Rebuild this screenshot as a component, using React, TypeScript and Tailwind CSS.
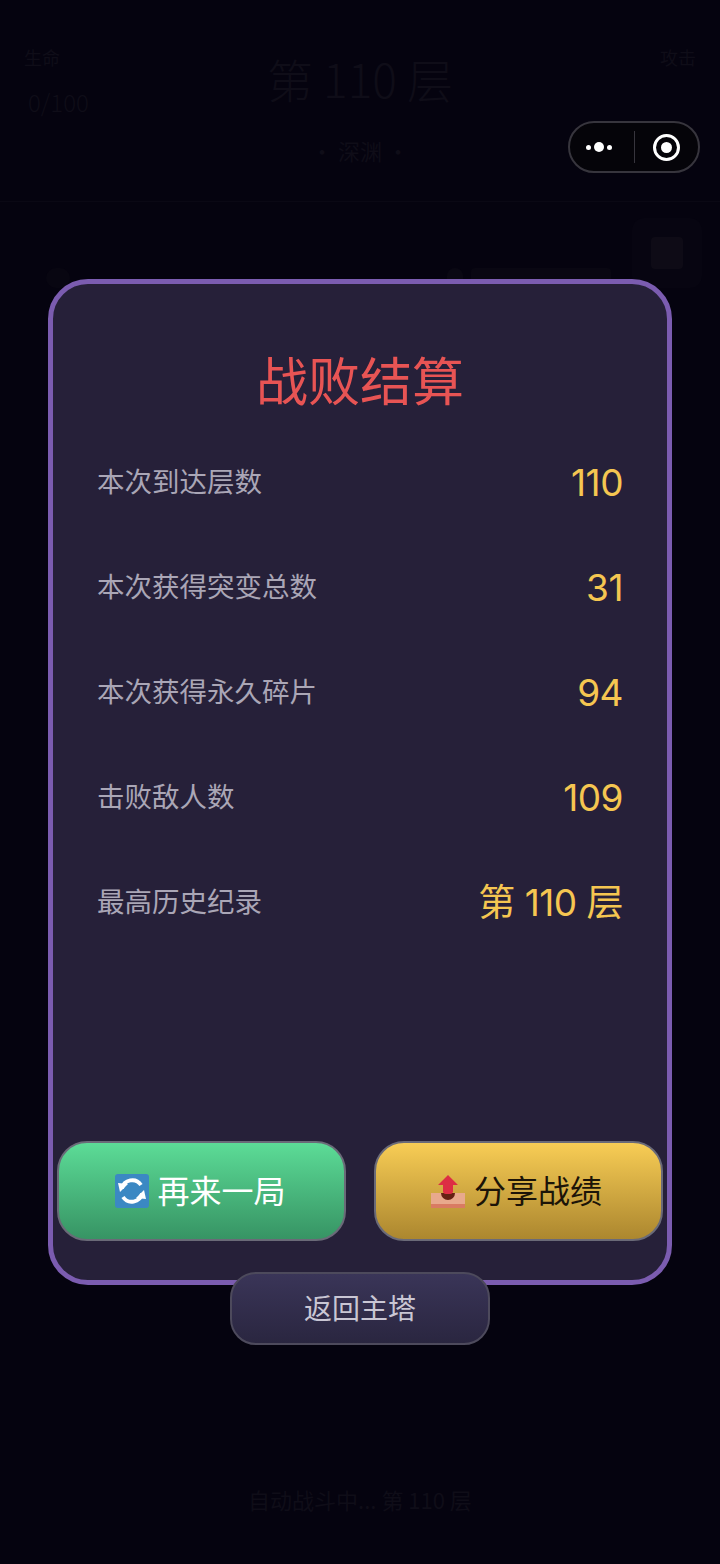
const stats = [
  { label: '本次到达层数', value: '110' },
  { label: '本次获得突变总数', value: '31' },
  { label: '本次获得永久碎片', value: '94' },
  { label: '击败敌人数', value: '109' },
  { label: '最高历史纪录', value: '第 110 层' },
];

function RefreshIcon() {
  return (
    <svg width="34" height="34" viewBox="0 0 34 34" className="shrink-0">
      <rect width="34" height="34" rx="3" fill="#3b88c3" />
      <path d="M7 14.5 A10.5 10.5 0 0 1 26 11" fill="none" stroke="#fff" strokeWidth="3.8" />
      <path d="M27 19.5 A10.5 10.5 0 0 1 8 23" fill="none" stroke="#fff" strokeWidth="3.8" />
      <path d="M3 9 L13 10 L5 18 Z" fill="#fff" />
      <path d="M21 24 L31 25 L29 16 Z" fill="#fff" />
    </svg>
  );
}

function ShareIcon() {
  return (
    <svg width="34" height="34" viewBox="0 0 34 34" className="shrink-0">
      <rect x="0" y="19" width="34" height="15" fill="#e8a98c" />
      <rect x="0" y="30" width="34" height="4" fill="#d97b62" />
      <path d="M10 19 H24 A7 7 0 0 1 10 19 Z" fill="#662113" />
      <path d="M17 1 L27 11 H22 V18 A3 3 0 0 1 19 20 H15 A3 3 0 0 1 12 18 V11 H7 Z" fill="#dd2e44" />
    </svg>
  );
}

export default function App() {
  return (
    <div className="relative h-[1564px] w-[720px] overflow-hidden bg-[#05030f] font-['Noto_Sans_CJK_SC',sans-serif]">
      {/* dim page behind the result dialog */}
      <div className="flex h-[202px] items-start justify-between border-b border-[#0a0814] px-6 pt-[42px] text-[#0f0d18]">
        <div className="flex w-[120px] flex-col text-lg">
          <span className="leading-[30px]">生命</span>
          <span className="mt-[15px] pl-1 text-2xl leading-[30px] font-light">0/100</span>
        </div>
        <div className="flex flex-col items-center">
          <span className="mt-[4px] text-[46px] leading-[64px] font-light">第 110 层</span>
          <span className="mt-[24px] text-[22px] leading-8">· 深渊 ·</span>
        </div>
        <span className="w-[120px] text-right text-lg leading-[30px]">攻击</span>
      </div>
      <div className="mt-4 flex h-[70px] items-end justify-between pr-[18px] pl-[46px]">
        <div className="h-[20px] w-6 rounded-full bg-[#080611]" />
        <div className="ml-[355px] flex items-end gap-2">
          <div className="h-[20px] w-4 rounded-full bg-[#0a0813]" />
          <div className="h-[20px] w-[140px] rounded-sm bg-[#090712]" />
        </div>
        <div className="flex h-[70px] w-[70px] items-center justify-center rounded-xl bg-[#070511]">
          <div className="h-8 w-8 rounded bg-[#0e0b16]" />
        </div>
      </div>
      <div className="mt-[1195px] text-center text-[22px] text-[#0f0d18]">自动战斗中... 第 110 层</div>

      {/* WeChat capsule */}
      <div className="absolute top-[121px] left-[568px] flex h-[52px] w-[132px] items-center rounded-full border-2 border-[#37353d] bg-[#050409]">
        <div className="flex w-[64px] items-center justify-center gap-[3px] pr-[6px]">
          <span className="h-[5px] w-[5px] rounded-full bg-white" />
          <span className="h-[10px] w-[10px] rounded-full bg-white" />
          <span className="h-[5px] w-[5px] rounded-full bg-white" />
        </div>
        <div className="h-8 w-px bg-[#37353d]" />
        <div className="flex flex-1 items-center justify-center">
          <div className="flex h-[27px] w-[27px] items-center justify-center rounded-full border-[3px] border-white">
            <span className="h-[11px] w-[11px] rounded-full bg-white" />
          </div>
        </div>
      </div>

      {/* result dialog */}
      <div className="absolute inset-0 flex flex-col items-center pt-[279px]">
        <div className="flex h-[1006px] w-[624px] flex-col rounded-[40px] border-[5px] border-[#7b5cb0] bg-[#262039] px-1 pb-[39px]">
          <h1 className="mt-[59px] text-center text-[52px] leading-[72px] font-normal text-[#e85454]">战败结算</h1>
          <div className="mt-[39px] flex flex-col gap-[55px] px-[40px]">
            {stats.map((s) => (
              <div key={s.label} className="flex h-[50px] items-center justify-between">
                <span className="pt-[4px] text-[27.5px] text-[#aaa6b6]">{s.label}</span>
                <span className="pt-[7px] font-['Inter','Noto_Sans_CJK_SC',sans-serif] text-[37px] font-normal tracking-[-0.5px] text-[#f5c651]">
                  {s.value}
                </span>
              </div>
            ))}
          </div>
          <div className="mt-auto flex justify-between">
            <button className="flex h-[100px] w-[289px] items-center justify-center gap-[8px] rounded-[30px] border-2 border-[#6a6a78] bg-gradient-to-b from-[#5cdc97] to-[#379464] pr-[2px] text-[32px] text-white">
              <RefreshIcon />
              <span className="-mt-[5px]">再来一局</span>
            </button>
            <button className="flex h-[100px] w-[289px] items-center justify-center gap-[9px] rounded-[30px] border-2 border-[#6a6a78] bg-gradient-to-b from-[#f8cd55] to-[#ac872f] pr-1 text-[32px] text-[#1c1408]">
              <ShareIcon />
              <span className="-mt-[5px]">分享战绩</span>
            </button>
          </div>
        </div>
        <button className="relative -mt-[13px] h-[73px] w-[260px] rounded-[26px] border-2 border-[#4d4a5c] bg-gradient-to-b from-[#3a3558] to-[#2a2640] pb-1 text-[28px] text-[#c9c6d4]">
          返回主塔
        </button>
      </div>
    </div>
  );
}
